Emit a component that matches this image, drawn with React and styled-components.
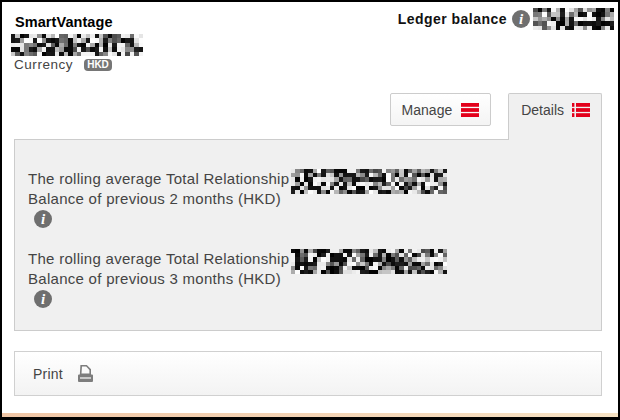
import React from "react";
import styled, { createGlobalStyle } from "styled-components";

const Global = createGlobalStyle`
  html, body { margin: 0; padding: 0; background: #000; }
  #root { width: 620px; height: 420px; }
  * { box-sizing: border-box; }
`;

const Frame = styled.div`
  width: 620px;
  height: 420px;
  background: #000;
  padding: 2px 2px 3px 2px;
  font-family: "Liberation Sans", Arial, sans-serif;
  color: #333;
  overflow: hidden;
`;
const Page = styled.div`
  height: 100%;
  display: flex;
  flex-direction: column;
  background: #fff;
`;
const Content = styled.div`
  flex: 1;
  padding: 0 16px 0 12px;
  display: flex;
  flex-direction: column;
`;
const Footer = styled.div`
  height: 4px;
  background: linear-gradient(90deg, #f0c6a6 0%, #f3d3b4 50%, #f6e2c4 100%);
`;
const Header = styled.header`
  display: flex;
  justify-content: space-between;
  align-items: flex-start;
  height: 91px;
`;
const Account = styled.div`
  display: flex;
  flex-direction: column;
  margin-left: -3px;
  padding-top: 12px;
`;
const Title = styled.h1`
  margin: 0 0 0 4px;
  font-size: 14.5px;
  line-height: 16px;
  font-weight: 700;
  color: #000;
  letter-spacing: 0.07px;
`;
const Currency = styled.div`
  display: flex;
  align-items: center;
  margin: 1px 0 0 3px;
  font-size: 13.5px;
  line-height: 16px;
  letter-spacing: 0.55px;
  color: #444;
`;
const Badge = styled.span`
  margin-left: 11px;
  padding: 0 3px;
  height: 12px;
  display: inline-flex;
  align-items: center;
  border-radius: 4px;
  background: #767676;
  color: #fff;
  font-size: 10px;
  font-weight: 700;
  letter-spacing: 0;
`;
const Ledger = styled.div`
  display: flex;
  align-items: center;
  padding-top: 6px;
  margin-right: -12px;
`;
const LedgerLabel = styled.span`
  font-size: 14px;
  font-weight: 700;
  color: #111;
  letter-spacing: 0.47px;
  margin-right: 5px;
`;
const Tabs = styled.nav`
  display: flex;
  justify-content: flex-end;
  align-items: flex-start;
  gap: 17px;
  height: 46px;
  position: relative;
  z-index: 1;
`;
const Tab = styled.div`
  display: flex;
  align-items: center;
  gap: ${(p) => (p.$active ? "8px" : "9px")};
  font-size: 14px;
  color: #444;
  border: 1px solid #ccc;
  border-radius: 2px;
  height: ${(p) => (p.$active ? "47px" : "33px")};
  padding: ${(p) => (p.$active ? "0 11px 14px 12px" : "0 11px 0 11px")};
  background: ${(p) => (p.$active ? "#f0f0f0" : "linear-gradient(#fff, #f4f4f4)")};
  ${(p) => p.$active && "border-bottom: none; border-radius: 2px 2px 0 0;"}
`;
const Panel = styled.section`
  height: 192px;
  background: #f0f0f0;
  border: 1px solid #ccc;
  padding: 29px 13px 0 13px;
  display: flex;
  flex-direction: column;
  gap: 10px;
`;
const Row = styled.div`
  display: grid;
  grid-template-columns: 263px auto;
  justify-content: start;
  height: 70px;
`;
const Label = styled.div`
  font-size: 15px;
  line-height: 20px;
  color: #444;
  letter-spacing: 0.28px;
  white-space: nowrap;
`;
const IconLine = styled.div`
  margin: 1px 0 0 6px;
  height: 18px;
  display: flex;
`;
const ValueCell = styled.div`
  display: flex;
  align-items: flex-start;
`;
const PrintBar = styled.div`
  margin-top: 20px;
  height: 45px;
  border: 1px solid #d0d0d0;
  background: linear-gradient(#fff, #f3f3f3);
  display: flex;
  align-items: center;
  padding: 0 0 0 18px;
  gap: 15px;
  font-size: 14px;
  color: #444;
  letter-spacing: 0.2px;
`;
const InfoCircle = styled.span`
  width: ${(p) => p.$size}px;
  height: ${(p) => p.$size}px;
  border-radius: 50%;
  background: #6f6f6f;
  color: #fff;
  display: inline-flex;
  align-items: center;
  justify-content: center;
  font-family: "Liberation Serif", serif;
  font-style: italic;
  font-weight: 700;
  font-size: 15px;
  line-height: 1;
`;
const MosaicBox = styled.svg`
  display: block;
  flex: none;
`;
const MosaicWrap = styled.span`
  display: block;
  margin-left: ${(p) => p.$dx || 0}px;
  margin-top: ${(p) => p.$dy || 0}px;
`;

function Mosaic({ w, h, cols, rows, seed }) {
  let a = seed;
  const next = () => {
    a = (a + 0x6d2b79f5) | 0;
    let t = Math.imul(a ^ (a >>> 15), 1 | a);
    t = (t + Math.imul(t ^ (t >>> 7), 61 | t)) ^ t;
    return ((t ^ (t >>> 14)) >>> 0) / 4294967296;
  };
  const cells = [];
  for (let y = 0; y < rows; y++) {
    for (let x = 0; x < cols; x++) {
      const r = next();
      const v = r < 0.36 ? next() * 30 : r < 0.62 ? 225 + next() * 30 : 70 + next() * 130;
      const c = Math.round(v);
      cells.push(<rect key={`${x}-${y}`} x={x} y={y} width="1" height="1" fill={`rgb(${c},${c},${c})`} />);
    }
  }
  return (
    <MosaicBox width={w} height={h} viewBox={`0 0 ${cols} ${rows}`} preserveAspectRatio="none" shapeRendering="crispEdges">
      {cells}
    </MosaicBox>
  );
}

const Burger = () => (
  <svg width="18" height="14" viewBox="0 0 18 14" fill="#e3001b" aria-hidden="true">
    <rect x="0" y="0" width="18" height="3.8" />
    <rect x="0" y="5.1" width="18" height="3.8" />
    <rect x="0" y="10.2" width="18" height="3.8" />
  </svg>
);
const ListIcon = () => (
  <svg width="18" height="14" viewBox="0 0 18 14" fill="#e3001b" aria-hidden="true">
    <rect x="0" y="0" width="2.4" height="3.8" />
    <rect x="0" y="5.1" width="2.4" height="3.8" />
    <rect x="0" y="10.2" width="2.4" height="3.8" />
    <rect x="4" y="0" width="14" height="3.8" />
    <rect x="4" y="5.1" width="14" height="3.8" />
    <rect x="4" y="10.2" width="14" height="3.8" />
  </svg>
);
const Printer = () => (
  <svg width="15" height="17" viewBox="0 0 15 17" fill="#7d7d7d" aria-hidden="true">
    <path fillRule="evenodd" d="M2.4 0h6.4L13 4.2V10H1.8ZM4 1.6 3.5 8.6h7.9V4.9L8.2 1.6Z" />
    <path d="M1 9.5h13a1 1 0 0 1 1 1V16a1 1 0 0 1-1 1H1a1 1 0 0 1-1-1v-5.5a1 1 0 0 1 1-1Z" />
    <rect x="2" y="12" width="11" height="2" fill="#c9c9c9" />
  </svg>
);

const rows = [
  { text: "previous 2 months", seed: 4242 },
  { text: "previous 3 months", seed: 9191 },
];

export default function App() {
  return (
    <Frame>
      <Global />
      <Page>
        <Content>
          <Header>
            <Account>
              <Title>SmartVantage</Title>
              <MosaicWrap $dx={0} $dy={4}>
                <Mosaic w={132} h={22} cols={30} rows={5} seed={1234} />
              </MosaicWrap>
              <Currency>
                Currency<Badge>HKD</Badge>
              </Currency>
            </Account>
            <Ledger>
              <LedgerLabel>Ledger balance</LedgerLabel>
              <InfoCircle $size={18}>i</InfoCircle>
              <MosaicWrap $dx={3}>
                <Mosaic w={81} h={22} cols={18} rows={5} seed={777} />
              </MosaicWrap>
            </Ledger>
          </Header>
          <Tabs>
            <Tab>
              Manage <Burger />
            </Tab>
            <Tab $active>
              Details <ListIcon />
            </Tab>
          </Tabs>
          <Panel>
            {rows.map((r) => (
              <Row key={r.seed}>
                <div>
                  <Label>
                    The rolling average Total Relationship
                    <br />
                    Balance of {r.text} (HKD)
                  </Label>
                  <IconLine>
                    <InfoCircle $size={18}>i</InfoCircle>
                  </IconLine>
                </div>
                <ValueCell>
                  <Mosaic w={156} h={25} cols={36} rows={6} seed={r.seed} />
                </ValueCell>
              </Row>
            ))}
          </Panel>
          <PrintBar>
            Print <Printer />
          </PrintBar>
        </Content>
        <Footer />
      </Page>
    </Frame>
  );
}
